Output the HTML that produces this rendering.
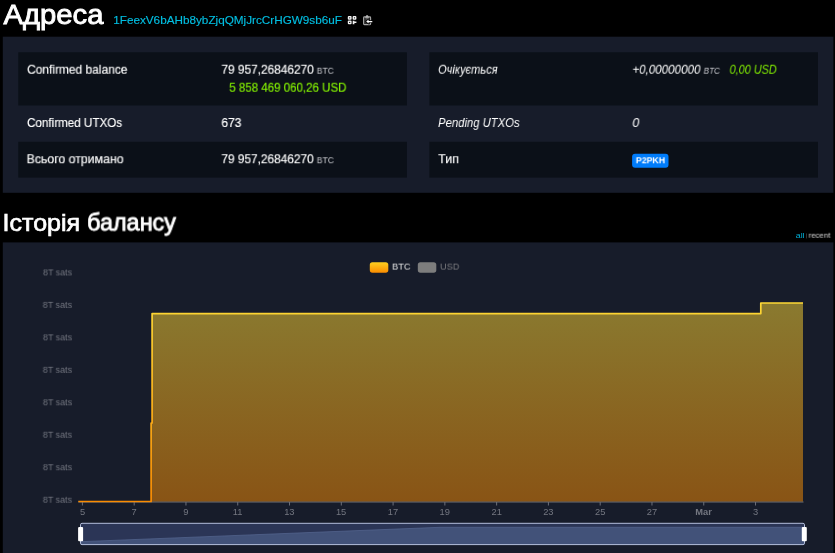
<!DOCTYPE html>
<html lang="uk">
<head>
<meta charset="utf-8">
<title>Адреса</title>
<style>
html,body{margin:0;padding:0;background:#000;}
body{width:835px;height:553px;position:relative;overflow:hidden;font-family:"Liberation Sans",sans-serif;color:#fff;}
.a{position:absolute;white-space:nowrap;line-height:1;transform-origin:0 0;will-change:transform;}
svg{position:absolute;left:0;top:0;}
</style>
</head>
<body>
<svg width="835" height="553" viewBox="0 0 835 553">
<rect x="2.8" y="36.7" width="830.6" height="156.1" fill="#171c2a"/>
<rect x="18.3" y="52.3" width="388.6" height="53.2" fill="#0b1018"/>
<rect x="18.3" y="141.8" width="388.6" height="35.8" fill="#0b1018"/>
<rect x="429.4" y="52.3" width="388.6" height="53.2" fill="#0b1018"/>
<rect x="429.4" y="141.8" width="388.6" height="35.8" fill="#0b1018"/>
<rect x="632.1" y="153.8" width="36.4" height="14" rx="3" fill="#007cfa"/>
<rect x="2.8" y="242.4" width="830.6" height="312" fill="#171c2a"/>
</svg>
<svg width="835" height="553" viewBox="0 0 835 553">
<g fill="#f4f4f4">
<rect x="347.8" y="16" width="3.8" height="3.7" rx="1"/>
<rect x="352.6" y="16" width="3.8" height="3.7" rx="1"/>
<rect x="347.8" y="20.6" width="3.8" height="3.7" rx="1"/>
<path d="M352.7 20.7h1.7v0.9h2v1.5h-2v1.1h-1.7z"/>
</g>
<g fill="#000">
<circle cx="349.7" cy="17.85" r="0.62"/>
<circle cx="354.5" cy="17.85" r="0.62"/>
<circle cx="349.7" cy="22.45" r="0.62"/>
</g>
<rect x="363.6" y="16.9" width="7" height="7.7" rx="0.8" fill="#2b2b2b" stroke="#a6a6a6" stroke-width="1.1"/>
<path d="M365.1 17.7L366.3 15.2H367.9L369.1 17.7Z" fill="#b8b8b8"/>
<path d="M365.6 18.8H369" stroke="#8a8a8a" stroke-width="0.8" fill="none"/>
<path d="M366.2 21.55L368.6 19.5V20.95H372.3V22.15H368.6V23.6Z" fill="#fff" stroke="#000" stroke-width="1.4" paint-order="stroke"/>
</svg>
<svg width="835" height="553" viewBox="0 0 835 553">
<defs>
<linearGradient id="ga" x1="0" y1="303" x2="0" y2="501.5" gradientUnits="userSpaceOnUse"><stop offset="0" stop-color="#FDD835"/><stop offset="1" stop-color="#FB8C00"/></linearGradient>
<linearGradient id="gleg" x1="0" y1="0" x2="0" y2="1"><stop offset="0" stop-color="#FDD020"/><stop offset="1" stop-color="#FB8C00"/></linearGradient>
</defs>
<!-- axis line + ticks -->
<path d="M78.3 502H803.5" stroke="#6e7079" stroke-width="1" fill="none"/>
<path d="M82.40 502V505.5M134.18 502V505.5M185.96 502V505.5M237.74 502V505.5M289.52 502V505.5M341.30 502V505.5M393.08 502V505.5M444.86 502V505.5M496.64 502V505.5M548.42 502V505.5M600.20 502V505.5M651.98 502V505.5M703.76 502V505.5M755.54 502V505.5" stroke="#6e7079" stroke-width="1" fill="none"/>
<!-- area -->
<path d="M78.3 501.5H151.1V423H152.1V313.6H760.8V303H803V501.5Z" fill="url(#ga)" opacity="0.5"/>
<path d="M78.3 501.5H151.1V423H152.1V313.6H760.8V303H803" fill="none" stroke="url(#ga)" stroke-width="1.7" stroke-linejoin="round"/>
<!-- legend -->
<rect x="369.8" y="262.2" width="18.5" height="10.5" rx="2.6" fill="url(#gleg)"/>
<rect x="417.8" y="262.2" width="18.5" height="10.5" rx="2.6" fill="#7d7d7d"/>
<!-- data zoom -->
<rect x="80.5" y="523.3" width="724" height="21.3" rx="1.5" fill="#2b3556"/>
<path d="M80.5 544.6V541.7L440 527.3H804.5V544.6Z" fill="#425279"/>
<path d="M80.5 541.7L440 527.3H804.5" fill="none" stroke="#566791" stroke-width="0.7"/>
<rect x="80.5" y="523.3" width="724" height="21.3" rx="1.5" fill="none" stroke="#b4bfdc" stroke-width="1"/>
<rect x="78.1" y="527" width="5" height="14.2" rx="1" fill="#fff"/>
<rect x="801.8" y="527" width="5" height="14.2" rx="1" fill="#fff"/>
</svg>
<div class="a" id="h1" style="left:3px;top:-4px;font-size:27.90px;transform:translate(0.43px,4.80px) scaleX(1.0495);color:#fff;-webkit-text-stroke:0.85px;">Адреса</div>
<div class="a" id="addr" style="left:113px;top:12px;font-size:11.60px;transform:translate(0.19px,1.90px) scaleX(1.0116);color:#00bfe2;-webkit-text-stroke:0.15px;">1FeexV6bAHb8ybZjqQMjJrcCrHGW9sb6uF</div>
<div class="a" id="l1" style="left:27px;top:61px;font-size:12.60px;transform:translate(0.14px,2.70px) scaleX(0.9483);-webkit-text-stroke:0.15px;color:#ffffff">Confirmed balance</div>
<div class="a" id="v1" style="left:221px;top:61px;font-size:12.60px;transform:translate(0.41px,2.70px) scaleX(0.9425);-webkit-text-stroke:0.15px;color:#ffffff">79 957,26846270</div>
<div class="a" id="v1s" style="left:316px;top:64px;font-size:9.20px;transform:translate(0.78px,2.70px) scaleX(0.9228);color:#c9cacf">BTC</div>
<div class="a" id="v1b" style="left:229px;top:79px;font-size:12.60px;transform:translate(0.27px,2.70px) scaleX(0.9145);-webkit-text-stroke:0.15px;color:#84f000">5 858 469 060,26 USD</div>
<div class="a" id="l2" style="left:27px;top:114px;font-size:12.60px;transform:translate(0.09px,3.00px) scaleX(0.9236);-webkit-text-stroke:0.15px;color:#ffffff">Confirmed UTXOs</div>
<div class="a" id="v2" style="left:221px;top:114px;font-size:12.60px;transform:translate(0.41px,3.00px) scaleX(0.9490);-webkit-text-stroke:0.15px;color:#ffffff">673</div>
<div class="a" id="l3" style="left:26px;top:150px;font-size:12.60px;transform:translate(0.58px,3.20px) scaleX(0.9773);-webkit-text-stroke:0.15px;color:#ffffff">Всього отримано</div>
<div class="a" id="v3" style="left:221px;top:150px;font-size:12.60px;transform:translate(0.36px,3.20px) scaleX(0.9416);-webkit-text-stroke:0.15px;color:#ffffff">79 957,26846270</div>
<div class="a" id="v3s" style="left:316px;top:154px;font-size:9.20px;transform:translate(0.75px,2.20px) scaleX(0.9314);color:#c9cacf">BTC</div>
<div class="a" id="r1" style="left:438px;top:61px;font-size:12.60px;transform:translate(0.06px,2.70px) scaleX(0.8803);font-style:italic;color:#ffffff">Очікується</div>
<div class="a" id="rv1" style="left:632px;top:61px;font-size:12.60px;transform:translate(0.46px,2.70px) scaleX(0.9187);font-style:italic;color:#ffffff">+0,00000000</div>
<div class="a" id="rv1s" style="left:703px;top:64px;font-size:9.20px;transform:translate(0.66px,2.70px) scaleX(0.8808);font-style:italic;color:#c9cacf">BTC</div>
<div class="a" id="rv1b" style="left:729px;top:61px;font-size:12.60px;transform:translate(0.57px,2.70px) scaleX(0.8645);font-style:italic;color:#84f000">0,00 USD</div>
<div class="a" id="r2" style="left:438px;top:114px;font-size:12.60px;transform:translate(0.02px,3.00px) scaleX(0.8963);font-style:italic;color:#ffffff">Pending UTXOs</div>
<div class="a" id="rv2" style="left:632px;top:114px;font-size:12.60px;transform:translate(0.37px,3.00px) scaleX(0.9900);font-style:italic;color:#ffffff">0</div>
<div class="a" id="r3" style="left:438px;top:150px;font-size:12.60px;transform:translate(0.15px,3.20px) scaleX(0.9804);-webkit-text-stroke:0.15px;color:#ffffff">Тип</div>
<div class="a" id="bd" style="left:635px;top:154px;font-size:9.20px;transform:translate(0.87px,2.30px) scaleX(0.9548);font-weight:bold;color:#fff">P2PKH</div>
<div class="a" id="h2a" style="left:2px;top:206px;font-size:23.90px;transform:translate(0.56px,4.50px) scaleX(1.0475);color:#fff;-webkit-text-stroke:0.65px;">Історія</div>
<div class="a" id="h2b" style="left:87px;top:206px;font-size:23.90px;transform:translate(0.05px,4.50px) scaleX(0.9794);color:#fff;-webkit-text-stroke:0.85px;">балансу</div>
<div class="a" id="all" style="left:795px;top:229px;font-size:8.00px;transform:translate(0.84px,2.70px) scaleX(1.0885);color:#00b0d8">all</div>
<div class="a" id="bar" style="left:806px;top:231px;font-size:5.60px;transform:translate(0.15px,2.40px) scaleX(0.4817);color:#999">|</div>
<div class="a" id="rec" style="left:808px;top:229px;font-size:8.00px;transform:translate(0.62px,2.70px) scaleX(0.9832);color:#d8d8d8">recent</div>
<div class="a" id="lg1" style="left:392px;top:260px;font-size:9.30px;transform:translate(0.15px,2.60px) scaleX(0.9778);color:#e3e3e3">BTC</div>
<div class="a" id="lg2" style="left:440px;top:260px;font-size:9.30px;transform:translate(0.03px,2.60px) scaleX(0.9806);color:#7f7f83">USD</div>
<div class="a" id="y0" style="left:42px;top:266px;font-size:9.30px;transform:translate(0.96px,2.40px) scaleX(0.9571);color:#747781">8T sats</div>
<div class="a" id="y1" style="left:42px;top:298px;font-size:9.30px;transform:translate(0.67px,2.87px) scaleX(0.9684);color:#747781">8T sats</div>
<div class="a" id="y2" style="left:42px;top:331px;font-size:9.30px;transform:translate(0.93px,2.34px) scaleX(0.9596);color:#747781">8T sats</div>
<div class="a" id="y3" style="left:42px;top:363px;font-size:9.30px;transform:translate(0.73px,2.81px) scaleX(0.9660);color:#747781">8T sats</div>
<div class="a" id="y4" style="left:42px;top:395px;font-size:9.30px;transform:translate(0.84px,3.28px) scaleX(0.9650);color:#747781">8T sats</div>
<div class="a" id="y5" style="left:42px;top:428px;font-size:9.30px;transform:translate(0.80px,2.75px) scaleX(0.9623);color:#747781">8T sats</div>
<div class="a" id="y6" style="left:42px;top:460px;font-size:9.30px;transform:translate(0.87px,3.22px) scaleX(0.9622);color:#747781">8T sats</div>
<div class="a" id="y7" style="left:42px;top:493px;font-size:9.30px;transform:translate(0.80px,2.69px) scaleX(0.9623);color:#747781">8T sats</div>
<div class="a" id="x0" style="left:79px;top:505px;font-size:9.30px;transform:translate(0.93px,2.70px) scaleX(1.0000);color:#747781;">5</div>
<div class="a" id="x1" style="left:131px;top:505px;font-size:9.30px;transform:translate(0.51px,2.70px) scaleX(1.0000);color:#747781;">7</div>
<div class="a" id="x2" style="left:183px;top:505px;font-size:9.30px;transform:translate(0.25px,2.70px) scaleX(1.0000);color:#747781;">9</div>
<div class="a" id="x3" style="left:232px;top:505px;font-size:9.30px;transform:translate(0.74px,2.70px) scaleX(1.0000);color:#747781;">11</div>
<div class="a" id="x4" style="left:284px;top:505px;font-size:9.30px;transform:translate(0.16px,2.70px) scaleX(1.0000);color:#747781;">13</div>
<div class="a" id="x5" style="left:335px;top:505px;font-size:9.30px;transform:translate(0.95px,2.70px) scaleX(1.0000);color:#747781;">15</div>
<div class="a" id="x6" style="left:387px;top:505px;font-size:9.30px;transform:translate(0.71px,2.70px) scaleX(1.0000);color:#747781;">17</div>
<div class="a" id="x7" style="left:439px;top:505px;font-size:9.30px;transform:translate(0.52px,2.70px) scaleX(1.0000);color:#747781;">19</div>
<div class="a" id="x8" style="left:491px;top:505px;font-size:9.30px;transform:translate(0.46px,2.70px) scaleX(1.0000);color:#747781;">21</div>
<div class="a" id="x9" style="left:543px;top:505px;font-size:9.30px;transform:translate(0.20px,2.70px) scaleX(1.0000);color:#747781;">23</div>
<div class="a" id="x10" style="left:595px;top:505px;font-size:9.30px;transform:translate(0.02px,2.70px) scaleX(1.0000);color:#747781;">25</div>
<div class="a" id="x11" style="left:646px;top:505px;font-size:9.30px;transform:translate(0.79px,2.70px) scaleX(1.0000);color:#747781;">27</div>
<div class="a" id="x12" style="left:695px;top:505px;font-size:9.30px;transform:translate(0.22px,2.70px) scaleX(1.0000);color:#747781;font-weight:bold;">Mar</div>
<div class="a" id="x13" style="left:752px;top:505px;font-size:9.30px;transform:translate(0.96px,2.70px) scaleX(1.0000);color:#747781;">3</div>
</body>
</html>
